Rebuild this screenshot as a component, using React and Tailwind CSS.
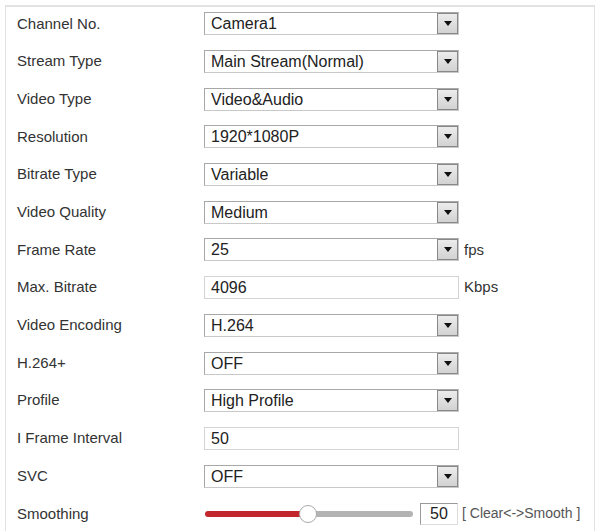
import React from 'react';

const rows = [
  { label: 'Channel No.', type: 'select', value: 'Camera1' },
  { label: 'Stream Type', type: 'select', value: 'Main Stream(Normal)' },
  { label: 'Video Type', type: 'select', value: 'Video&Audio' },
  { label: 'Resolution', type: 'select', value: '1920*1080P' },
  { label: 'Bitrate Type', type: 'select', value: 'Variable' },
  { label: 'Video Quality', type: 'select', value: 'Medium' },
  { label: 'Frame Rate', type: 'select', value: '25', unit: 'fps' },
  { label: 'Max. Bitrate', type: 'input', value: '4096', unit: 'Kbps' },
  { label: 'Video Encoding', type: 'select', value: 'H.264' },
  { label: 'H.264+', type: 'select', value: 'OFF' },
  { label: 'Profile', type: 'select', value: 'High Profile' },
  { label: 'I Frame Interval', type: 'input', value: '50' },
  { label: 'SVC', type: 'select', value: 'OFF' },
];

function SelectBox({ value }) {
  return (
    <div className="flex h-[23px] w-[255px] items-stretch border border-[#a8a8a8] border-b-[#c8c8c8] border-r-[#c8c8c8] bg-white">
      <div className="flex-1 truncate pl-[6px] text-[16px] leading-[21px] text-[#222]">{value}</div>
      <div className="flex w-[21px] items-center justify-center border border-[#888] bg-gradient-to-b from-[#ececec] to-[#d2d2d2]">
        <svg width="8" height="5" viewBox="0 0 8 5">
          <path d="M0 0 L8 0 L4 5 Z" fill="#111" />
        </svg>
      </div>
    </div>
  );
}

function InputBox({ value }) {
  return (
    <div className="h-[23px] w-[255px] border border-[#d4d4d4] bg-white pl-[6px] text-[16px] leading-[21px] text-[#222]">
      {value}
    </div>
  );
}

export default function App() {
  return (
    <div className="h-[531px] w-[600px] overflow-hidden bg-white font-['Liberation_Sans',Arial,sans-serif]">
      <div className="mx-[5px] mt-[5px] h-[540px] border-l border-r border-t-2 border-[#e2e2e2] pl-[11px]">
        <div className="-mt-[2px]">
          {rows.map((r) => (
            <div key={r.label} className="flex h-[37.7px] items-center">
              <div className="w-[187px] text-[15px] text-[#333]">{r.label}</div>
              {r.type === 'select' ? <SelectBox value={r.value} /> : <InputBox value={r.value} />}
              {r.unit && <span className="ml-[5px] text-[15px] text-[#333]">{r.unit}</span>}
            </div>
          ))}
          <div className="flex h-[37.7px] items-center">
            <div className="w-[188px] text-[15px] text-[#333]">Smoothing</div>
            <div className="relative flex h-[20px] w-[208px] items-center">
              <div className="h-[6px] w-[101px] rounded-l-full bg-[#c1272d]" />
              <div className="h-[6px] flex-1 rounded-r-full bg-[#b3b3b3]" />
              <div className="absolute left-[94px] top-[1px] h-[18px] w-[18px] rounded-full border border-[#aaa] bg-white" />
            </div>
            <div className="ml-[7px] h-[22px] w-[38px] border border-[#999] border-b-[#ddd] border-r-[#ddd] text-center text-[16px] leading-[20px] text-[#222]">
              50
            </div>
            <span className="ml-[4px] text-[14px] text-[#555]">[ Clear&lt;-&gt;Smooth ]</span>
          </div>
        </div>
      </div>
    </div>
  );
}
